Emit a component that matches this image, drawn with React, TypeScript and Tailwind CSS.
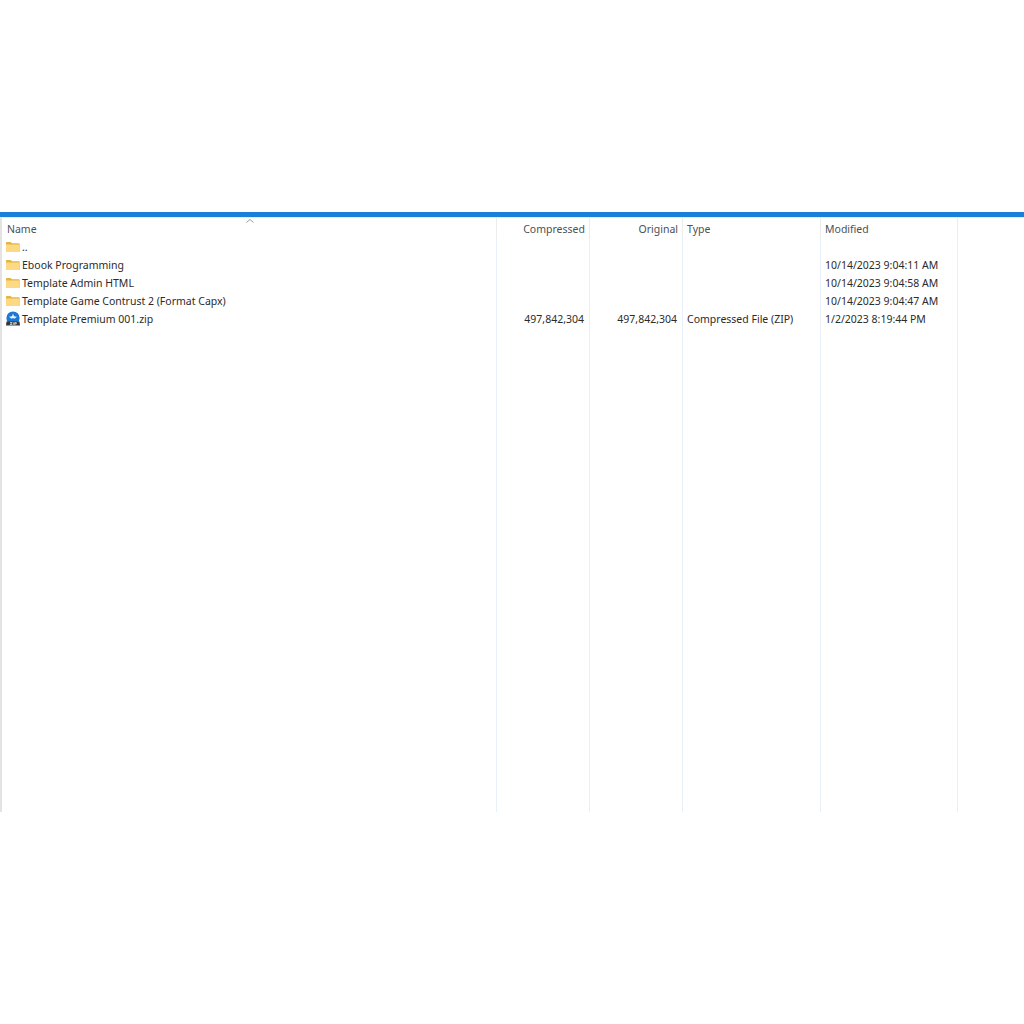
import React from 'react';

const FolderIcon = () => (
  <svg width="16" height="16" viewBox="0 0 16 16" className="shrink-0">
    <path d="M1 4 C1 3.4 1.4 3 2 3 H5.5 L7 4.3 H14 C14.4 4.3 14.7 4.6 14.7 5 V12.4 C14.7 12.8 14.4 13 14 13 H1.7 C1.3 13 1 12.8 1 12.4 Z" fill="#e6b445" />
    <path d="M1 5.6 H14.7 V12.4 C14.7 12.8 14.4 13 14 13 H1.7 C1.3 13 1 12.8 1 12.4 Z" fill="#fcd982" />
  </svg>
);

const ZipIcon = () => (
  <svg width="16" height="16" viewBox="0 0 16 16" className="shrink-0">
    <circle cx="8" cy="7" r="6.6" fill="#1c78cf" />
    <path d="M8 2.5 L9 5.2 L12 5.8 L9.5 7.8 L8 7 L6.5 7.8 L4 5.8 L7 5.2 Z" fill="#e8f3fc" />
    <path d="M1.5 10.5 H14.5 L15 14.5 H1 Z" fill="#33373c" />
    <path d="M5 11.6 H7 L5.2 13.6 H7.2" stroke="#ffffff" strokeWidth="0.7" fill="none" />
    <path d="M8.3 11.4 V13.8 M9.7 13.8 V11.6 H11.3 V12.9 H9.7" stroke="#ffffff" strokeWidth="0.7" fill="none" />
  </svg>
);

const files = [
  { name: '..', icon: 'folder', compressed: '', original: '', type: '', modified: '' },
  { name: 'Ebook Programming', icon: 'folder', compressed: '', original: '', type: '', modified: '10/14/2023 9:04:11 AM' },
  { name: 'Template Admin HTML', icon: 'folder', compressed: '', original: '', type: '', modified: '10/14/2023 9:04:58 AM' },
  { name: 'Template Game Contrust 2 (Format Capx)', icon: 'folder', compressed: '', original: '', type: '', modified: '10/14/2023 9:04:47 AM' },
  { name: 'Template Premium 001.zip', icon: 'zip', compressed: '497,842,304', original: '497,842,304', type: 'Compressed File (ZIP)', modified: '1/2/2023 8:19:44 PM' },
];

const Header = ({ label, align }: { label: string; align: string }) => (
  <div className={`h-[20px] pt-[4px] -mr-[1px] flex items-center border-r border-[#ececec] text-[#4a5157] ${align}`}>
    {label}
  </div>
);

const Cell = ({ value, right }: { value: string; right?: boolean }) => (
  <div className={`h-[18px] pt-[2px] flex items-center whitespace-nowrap ${right ? 'justify-end pr-[5px]' : 'pl-[4px]'}`}>
    {value}
  </div>
);

export default function App() {
  return (
    <div className="w-[1024px] h-[1024px] bg-white overflow-hidden text-[10.5px] text-[#2b2b2b] font-['Noto_Sans',sans-serif]">
      <div className="h-[212px]" />
      <div className="h-[5px] bg-[#1a7fd9]" />
      <div className="h-[1px] bg-[#e8e8e8]" />
      <div className="flex h-[594px] border-l-2 border-[#e3e3e3]">
        {/* Name column */}
        <div className="relative w-[495px] border-r border-[#e8f1fa]">
          <Header label="Name" align="pl-[5px]" />
          <svg width="8" height="4" viewBox="0 0 8 4" className="absolute left-[244px] top-[1px]">
            <path d="M0.5 3.5 L4 0.5 L7.5 3.5" stroke="#9a9a9a" fill="none" />
          </svg>
          {files.map((f, i) => (
            <div key={i} className="h-[18px] flex items-center gap-[1px] pl-[3px] whitespace-nowrap">
              {f.icon === 'zip' ? <ZipIcon /> : <FolderIcon />}
              <span className="mt-[2px]">{f.name}</span>
            </div>
          ))}
        </div>

        <div className="w-[93px] border-r border-[#e8f1fa]">
          <Header label="Compressed" align="justify-end pr-[4px]" />
          {files.map((f, i) => <Cell key={i} value={f.compressed} right />)}
        </div>

        <div className="w-[93px] border-r border-[#e8f1fa]">
          <Header label="Original" align="justify-end pr-[4px]" />
          {files.map((f, i) => <Cell key={i} value={f.original} right />)}
        </div>

        <div className="w-[138px] border-r border-[#e8f1fa]">
          <Header label="Type" align="pl-[4px]" />
          {files.map((f, i) => <Cell key={i} value={f.type} />)}
        </div>

        <div className="w-[137px] border-r border-[#e8f1fa]">
          <Header label="Modified" align="pl-[4px]" />
          {files.map((f, i) => <Cell key={i} value={f.modified} />)}
        </div>
      </div>
    </div>
  );
}
